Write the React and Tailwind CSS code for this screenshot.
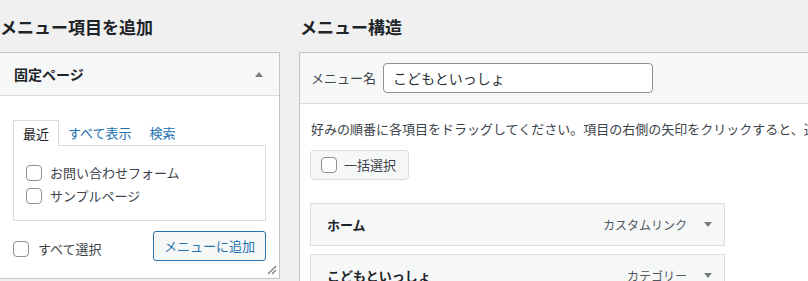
import React from 'react';

const Checkbox = () => (
  <span className="block w-4 h-4 shrink-0 border border-[#8c8f94] rounded-[4px] bg-white" />
);

const TriangleUp = () => (
  <svg width="8" height="5" viewBox="0 0 8 5" className="block">
    <polygon points="4,0 8,5 0,5" fill="#787c82" />
  </svg>
);

const TriangleDown = () => (
  <svg width="8" height="5" viewBox="0 0 8 5" className="block">
    <polygon points="0,0 8,0 4,5" fill="#787c82" />
  </svg>
);

const MenuItem = ({ title, type }) => (
  <div className="w-[415px] h-[43px] border border-[#dcdcde] bg-[#f6f7f7] flex items-center justify-between pl-[16px] pr-[12px]">
    <span className="text-[13px] font-semibold text-[#1d2327]">{title}</span>
    <div className="flex items-center gap-[17px]">
      <span className="text-[12px] text-[#50575e]">{type}</span>
      <TriangleDown />
    </div>
  </div>
);

const App = () => {
  const pages = ['お問い合わせフォーム', 'サンプルページ'];

  return (
    <div className="w-[808px] h-[281px] overflow-hidden bg-[#f0f0f1] flex font-['Noto_Sans_CJK_JP',sans-serif] text-[13px] text-[#3c434a]">
      {/* left column: add menu items */}
      <div className="ml-[-1px] w-[281px] shrink-0">
        <h2 className="h-[52px] pt-[14px] pl-px text-[17px] leading-[26px] font-semibold text-[#1d2327]">
          メニュー項目を追加
        </h2>
        <div className="relative border border-[#c3c4c7] bg-white">
          <div className="h-[43px] bg-[#f6f7f7] border-b border-[#dcdcde] flex items-center justify-between pl-[14px] pr-[16px]">
            <span className="text-[14px] font-semibold text-[#1d2327]">固定ページ</span>
            <TriangleUp />
          </div>

          <div className="pt-[24px] px-[13px] pb-[17px]">
            <div className="flex items-end">
              <div className="relative z-10 -mb-px w-[46px] h-[26px] border border-b-0 border-[#dcdcde] bg-white flex items-center justify-center text-[#1d2327]">
                最近
              </div>
              <span className="px-[9px] text-[#2271b1] leading-[25px]">すべて表示</span>
              <span className="px-[9px] text-[#2271b1] leading-[25px]">検索</span>
            </div>
            <div className="border border-[#dcdcde] pt-[15px] pb-[13px] pl-[12px]">
              {pages.map((p) => (
                <label key={p} className="h-[23px] flex items-center gap-[8px]">
                  <Checkbox />
                  <span>{p}</span>
                </label>
              ))}
            </div>
            <div className="mt-[10px] flex items-center justify-between">
              <label className="mt-[5px] flex items-center gap-[9px]">
                <Checkbox />
                <span>すべて選択</span>
              </label>
              <button className="h-[30px] w-[113px] border border-[#2271b1] rounded-[3px] bg-[#f6f7f7] text-[#2271b1] text-[13px]">
                メニューに追加
              </button>
            </div>
          </div>

          <svg width="10" height="10" viewBox="0 0 10 10" className="absolute right-[2px] bottom-[3px]">
            <line x1="9" y1="1" x2="1" y2="9" stroke="#787c82" strokeWidth="1.2" />
            <line x1="9" y1="5" x2="5" y2="9" stroke="#787c82" strokeWidth="1.2" />
          </svg>
        </div>
      </div>

      {/* right column: menu structure */}
      <div className="ml-[19px] w-[620px] shrink-0">
        <h2 className="h-[52px] pt-[14px] pl-px text-[17px] leading-[26px] font-semibold text-[#1d2327]">
          メニュー構造
        </h2>
        <div className="border border-[#c3c4c7] bg-white">
          <div className="h-[51px] bg-[#f6f7f7] border-b border-[#dcdcde] flex items-center pl-[11px] gap-[7px]">
            <span>メニュー名</span>
            <input
              type="text"
              defaultValue="こどもといっしょ"
              className="w-[270px] h-[30px] border border-[#8c8f94] rounded-[4px] bg-white px-[9px] text-[14px] text-[#2c3338] outline-none"
            />
          </div>

          <div className="pt-[15px] pl-[10px] pb-[20px]">
            <p className="whitespace-nowrap leading-[20px] pl-px">
              好みの順番に各項目をドラッグしてください。項目の右側の矢印をクリックすると、追加の設定オプションが表示されます。
            </p>
            <div className="mt-[11px] w-[99px] h-[30px] border border-[#dcdcde] rounded-[4px] bg-[#f6f7f7] flex items-center pl-[10px] gap-[7px]">
              <Checkbox />
              <span>一括選択</span>
            </div>
            <div className="mt-[23px] flex flex-col gap-[8px]">
              <MenuItem title="ホーム" type="カスタムリンク" />
              <MenuItem title="こどもといっしょ" type="カテゴリー" />
            </div>
          </div>
        </div>
      </div>
    </div>
  );
};

export default App;
